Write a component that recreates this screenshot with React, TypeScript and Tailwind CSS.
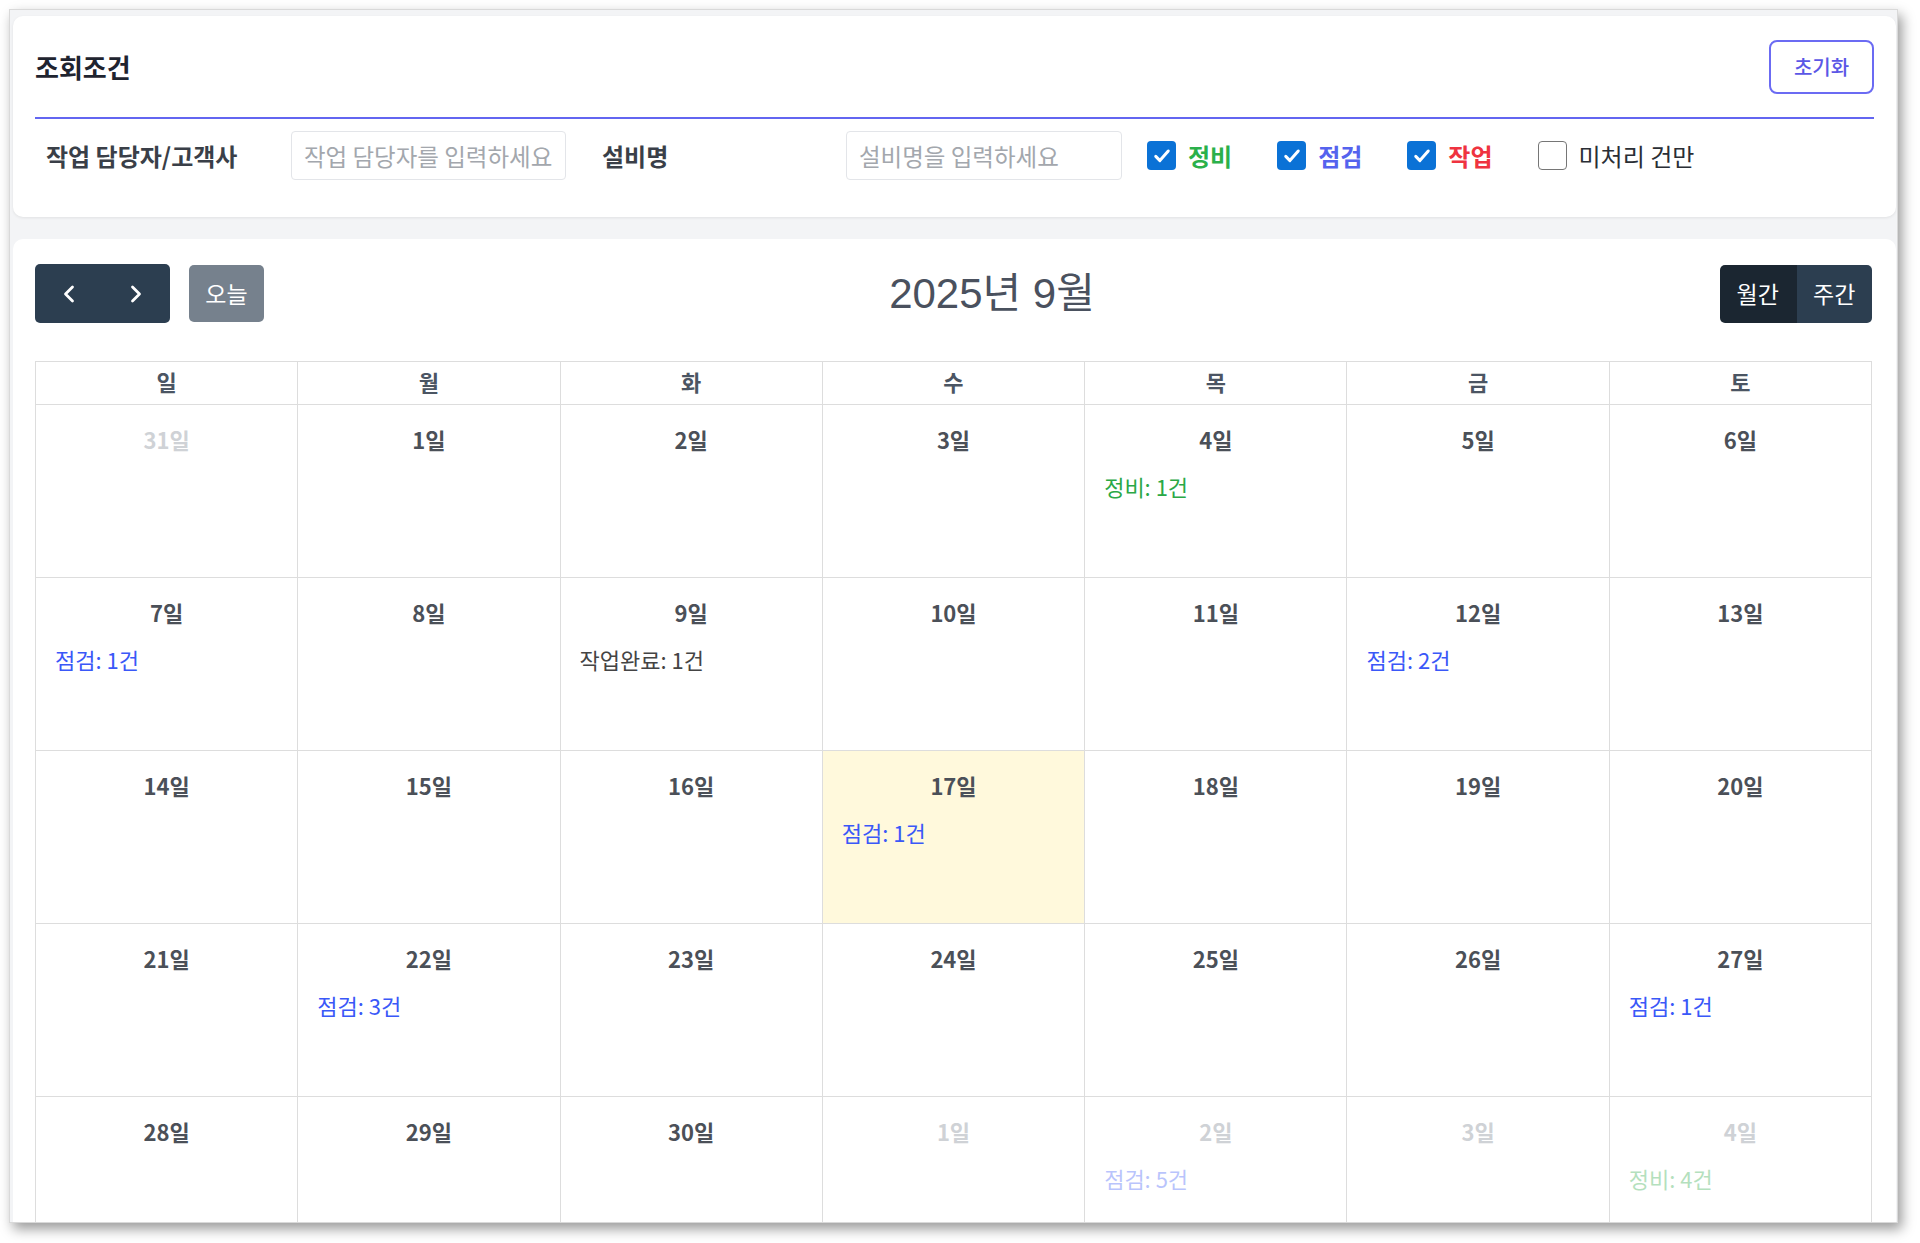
import React from "react";
import { ChevronLeft, ChevronRight } from "lucide-react";

type Ev = { text: string; color: string };
type Day = { d: number; other?: boolean; today?: boolean; ev?: Ev };

const GREEN = "text-[#2aa846]";
const BLUE = "text-[#3a58f8]";

const weeks: Day[][] = [
    [
        { d: 31, other: true },
        { d: 1 },
        { d: 2 },
        { d: 3 },
        { d: 4, ev: { text: "정비: 1건", color: GREEN } },
        { d: 5 },
        { d: 6 },
    ],
    [
        { d: 7, ev: { text: "점검: 1건", color: BLUE } },
        { d: 8 },
        { d: 9, ev: { text: "작업완료: 1건", color: "text-[#444]" } },
        { d: 10 },
        { d: 11 },
        { d: 12, ev: { text: "점검: 2건", color: BLUE } },
        { d: 13 },
    ],
    [
        { d: 14 },
        { d: 15 },
        { d: 16 },
        { d: 17, today: true, ev: { text: "점검: 1건", color: BLUE } },
        { d: 18 },
        { d: 19 },
        { d: 20 },
    ],
    [
        { d: 21 },
        { d: 22, ev: { text: "점검: 3건", color: BLUE } },
        { d: 23 },
        { d: 24 },
        { d: 25 },
        { d: 26 },
        { d: 27, ev: { text: "점검: 1건", color: BLUE } },
    ],
    [
        { d: 28 },
        { d: 29 },
        { d: 30 },
        { d: 1, other: true },
        { d: 2, other: true, ev: { text: "점검: 5건", color: BLUE } },
        { d: 3, other: true },
        { d: 4, other: true, ev: { text: "정비: 4건", color: GREEN } },
    ],
];

const dayNames = ["일", "월", "화", "수", "목", "금", "토"];

function Check({ checked, label, color }: { checked: boolean; label: string; color: string }) {
    return (
        <label className="flex items-center gap-[12px]">
            {checked ? (
                <span className="flex h-[29px] w-[29px] items-center justify-center rounded-[4px] bg-[#0b72d6]">
                    <svg width="20" height="20" viewBox="0 0 24 24" fill="none">
                        <polyline points="4.5 12.5 9.5 17.5 19.5 6" stroke="white" strokeWidth="3.6" strokeLinecap="round" strokeLinejoin="round" />
                    </svg>
                </span>
            ) : (
                <span className="h-[29px] w-[29px] rounded-[4px] border-[1.5px] border-[#767676] bg-white" />
            )}
            <span className={`text-[24px] leading-none ${color}`}>{label}</span>
        </label>
    );
}

export default function App() {
    return (
        <div className="relative h-[1243px] w-[1920px] overflow-hidden bg-white font-['Noto_Sans_CJK_KR','Noto_Sans',sans-serif]">
            <div className="ml-[9px] pt-[9px]">
                {/* window */}
                <div className="h-[1214px] w-[1889px] overflow-hidden border border-[#d9d9d9] bg-[#f3f4f6] pl-[3px] pr-[1px] pt-[6px] shadow-[4px_6px_12px_rgba(0,0,0,0.4)]">
                    {/* search conditions */}
                    <div className="h-[201px] rounded-[10px] bg-white px-[22px] shadow-[0_1px_3px_rgba(0,0,0,0.08)]">
                        <div className="flex h-[103px] items-center justify-between border-b-2 border-[#6366f1]">
                            <h2 className="text-[26px] font-bold text-[#1f2430]">조회조건</h2>
                            <button className="h-[54px] w-[105px] rounded-[8px] border-2 border-[#6b6bf3] text-[20px] font-medium text-[#5b57e6]">
                                초기화
                            </button>
                        </div>
                        <div className="flex items-center pt-[12px]">
                            <div className="w-[256px] pl-[11px] text-[24px] font-bold text-[#3a3f48]">작업 담당자/고객사</div>
                            <input
                                className="h-[49px] w-[275px] rounded-[4px] border border-[#e3e5e9] px-[12px] text-[23.5px] placeholder-[#a3a7ad] outline-none"
                                placeholder="작업 담당자를 입력하세요"
                            />
                            <div className="ml-[25px] w-[255px] pl-[11px] text-[24px] font-bold text-[#3a3f48]">설비명</div>
                            <input
                                className="h-[49px] w-[276px] rounded-[4px] border border-[#e3e5e9] px-[12px] text-[23.5px] placeholder-[#a3a7ad] outline-none"
                                placeholder="설비명을 입력하세요"
                            />
                            <div className="ml-[25px] flex items-center gap-[45px]">
                                <Check checked label="정비" color="font-bold text-[#2bb04a]" />
                                <Check checked label="점검" color="font-bold text-[#5563ee]" />
                                <Check checked label="작업" color="font-bold text-[#ef3340]" />
                                <Check checked={false} label="미처리 건만" color="text-[#2a2e35]" />
                            </div>
                        </div>
                    </div>

                    {/* calendar */}
                    <div className="mt-[22px] h-[1100px] rounded-t-[10px] bg-white pl-[22px] pr-[24px] pt-[25px]">
                        <div className="flex h-[59px] items-center justify-between">
                            <div className="flex items-center gap-[19px]">
                                <div className="flex h-[59px] w-[135px] overflow-hidden rounded-[5px] bg-[#2c3e50]">
                                    <button className="flex flex-1 items-center justify-center text-white">
                                        <ChevronLeft size={28} strokeWidth={2.4} />
                                    </button>
                                    <button className="flex flex-1 items-center justify-center text-white">
                                        <ChevronRight size={28} strokeWidth={2.4} />
                                    </button>
                                </div>
                                <button className="h-[57px] w-[75px] rounded-[5px] bg-[#76818d] text-[23px] text-white">오늘</button>
                            </div>
                            <h1 className="font-['Liberation_Sans','Noto_Sans_CJK_KR',sans-serif] text-[42px] font-normal leading-none text-[#4a515e]">
                                2025년 9월
                            </h1>
                            <div className="flex h-[58px] w-[152px] overflow-hidden rounded-[5px] text-[23px] text-white">
                                <button className="flex-1 bg-[#1b2631]">월간</button>
                                <button className="flex-1 border-l border-[#1b2631] bg-[#2c3e50]">주간</button>
                            </div>
                        </div>

                        <div className="mt-[38px] grid grid-cols-7 border-l border-t border-[#dddddd]">
                            {dayNames.map((n) => (
                                <div
                                    key={n}
                                    className="flex h-[43px] items-center justify-center border-b border-r border-[#dddddd] pb-[3px] text-[22px] font-bold text-[#4b5563]"
                                >
                                    {n}
                                </div>
                            ))}
                            {weeks.flat().map((day, i) => (
                                <div
                                    key={i}
                                    className={`h-[173px] border-b border-r border-[#dddddd] ${day.today ? "bg-[#fff9dc]" : ""}`}
                                >
                                    <div
                                        className={`pt-[19px] text-center text-[22px] font-semibold leading-[30px] ${
                                            day.other ? "text-[#cfd2d6]" : "text-[#4b5058]"
                                        }`}
                                    >
                                        {day.d}일
                                    </div>
                                    {day.ev && (
                                        <div
                                            className={`mt-[18px] pl-[19px] text-[22px] leading-[28px] ${day.ev.color} ${
                                                day.other ? "opacity-35" : ""
                                            }`}
                                        >
                                            {day.ev.text}
                                        </div>
                                    )}
                                </div>
                            ))}
                        </div>
                    </div>
                </div>
            </div>
        </div>
    );
}
